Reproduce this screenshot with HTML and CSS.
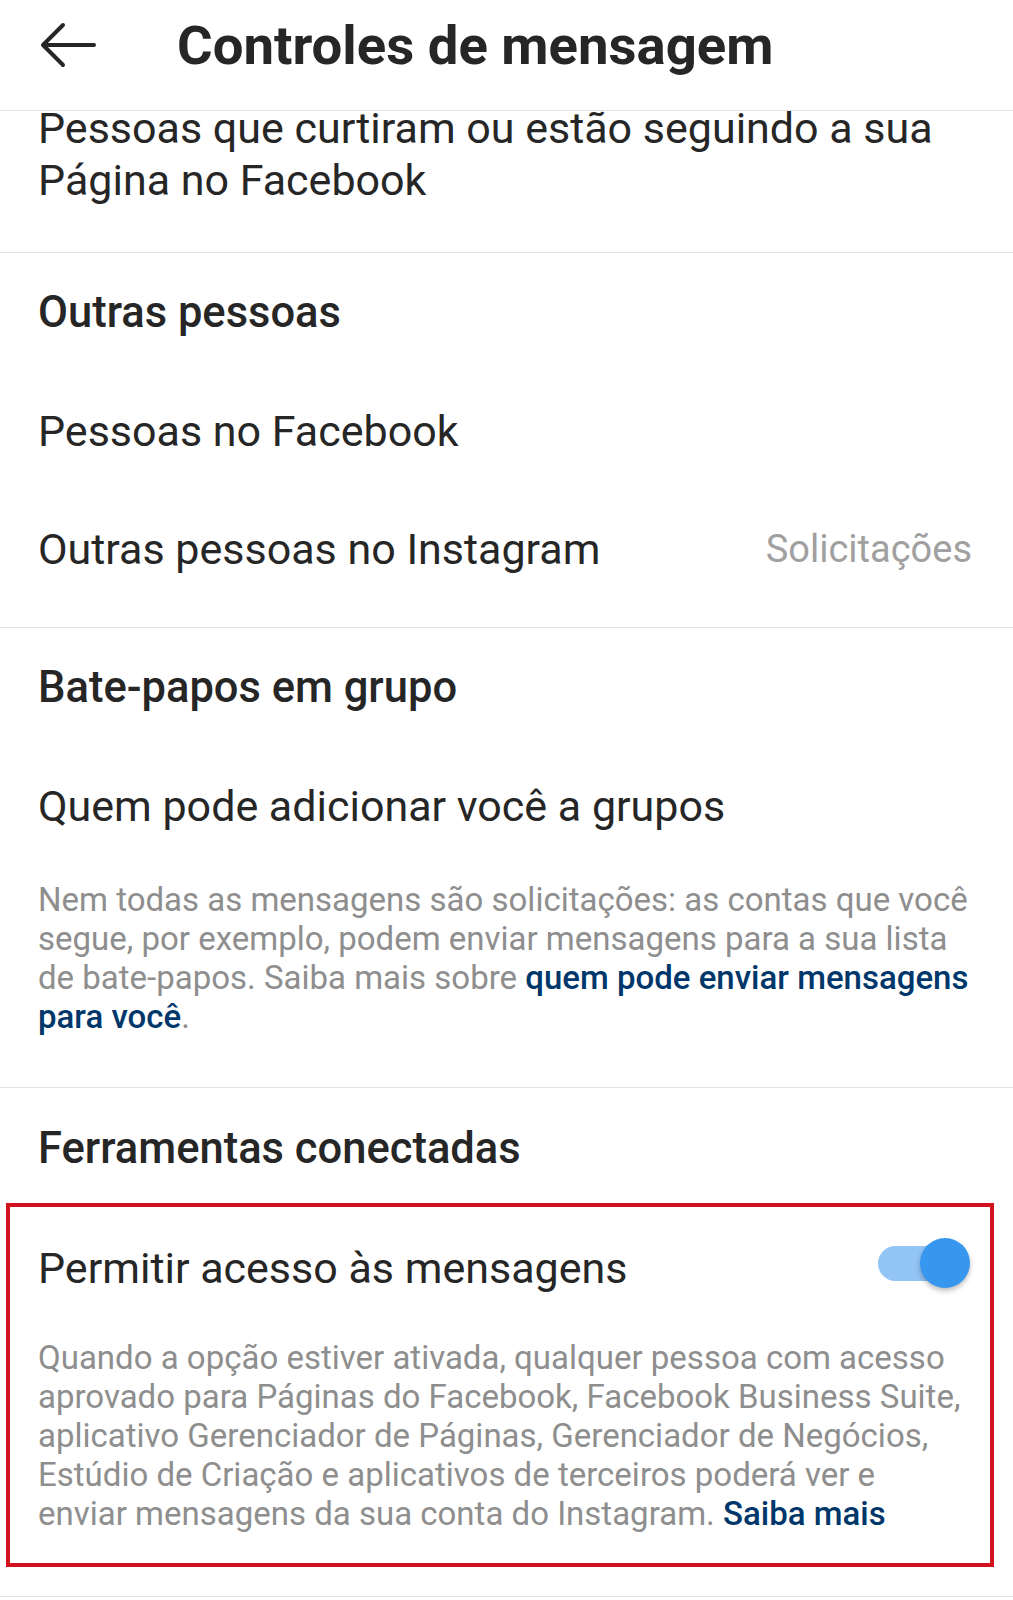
FILE: index.html
```html
<!DOCTYPE html>
<html lang="pt-BR">
<head>
  <meta charset="UTF-8">
  <meta name="viewport" content="width=device-width, initial-scale=1.0">
  <title>Controles de mensagem</title>
  <link rel="stylesheet" href="styles.css">
</head>
<body>
  <header class="topbar">
    <svg class="back-icon" width="60" height="48" viewBox="0 0 60 48" aria-label="Voltar">
      <path d="M56 24H5M25 4L5 24l20 20" fill="none" stroke="#262626" stroke-width="4" stroke-linecap="round" stroke-linejoin="round"/>
    </svg>
    <h1 class="title">Controles de mensagem</h1>
  </header>

  <!-- lista já rolada: o primeiro item aparece cortado debaixo do cabeçalho -->
  <section class="section first">
    <p class="item-text">Pessoas que curtiram ou estão seguindo a sua Página no Facebook</p>
  </section>

  <section class="section">
    <div class="row heading">Outras pessoas</div>
    <div class="row">Pessoas no Facebook</div>
    <div class="row">
      <span>Outras pessoas no Instagram</span>
      <span class="value">Solicitações</span>
    </div>
  </section>

  <section class="section">
    <div class="row heading">Bate-papos em grupo</div>
    <div class="row">Quem pode adicionar você a grupos</div>
    <p class="note">Nem todas as mensagens são solicitações: as contas que você segue, por exemplo, podem enviar mensagens para a sua lista de bate-papos. Saiba mais sobre <a href="#" class="link">quem pode enviar mensagens para você</a>.</p>
  </section>

  <section class="section last">
    <div class="row heading">Ferramentas conectadas</div>
    <div class="highlight">
      <div class="row toggle-row">
        <span>Permitir acesso às mensagens</span>
        <span class="switch"><span class="knob"></span></span>
      </div>
      <p class="note">Quando a opção estiver ativada, qualquer pessoa com acesso aprovado para Páginas do Facebook, Facebook Business Suite, aplicativo Gerenciador de Páginas, Gerenciador de Negócios, Estúdio de Criação e aplicativos de terceiros poderá ver e enviar mensagens da sua conta do Instagram. <a href="#" class="link">Saiba mais</a></p>
    </div>
  </section>
</body>
</html>
```

FILE: styles.css
```css
body {
  margin: 0;
  background: #fff;
  color: #262626;
  font-family: Roboto, "Noto Sans", sans-serif;
  overflow: hidden;
}

/* cabeçalho */
.topbar {
  position: relative;
  z-index: 1;
  display: flex;
  align-items: center;
  height: 90px;
  padding: 0 0 20px 38px;
  background: #fff;
  border-bottom: 1px solid #e2e2e2;
}

.back-icon {
  flex: none;
  margin-right: 79px;
}

.title {
  margin: 0;
  font-size: 54.5px;
  line-height: 54px;
  font-weight: 700;
}

/* seções */
.section {
  padding: 1px 0 19px;
  border-bottom: 1px solid #e2e2e2;
}

.section.first {
  margin-top: -9px;
  padding: 0 38px 46px;
}

.item-text {
  margin: 0;
  font-size: 43px;
  line-height: 52px;
}

.row {
  display: flex;
  align-items: center;
  justify-content: space-between;
  min-height: 118px;
  padding: 0 41px 0 38px;
  font-size: 43px;
  line-height: 52px;
}

.heading {
  font-weight: 500;
  font-size: 43.5px;
}

.value {
  color: #a0a0a0;
  font-size: 38px;
}

.note {
  margin: 15px 0 0;
  padding: 0 35px 0 38px;
  color: #8e8e8e;
  font-size: 33px;
  line-height: 39px;
}

.section .note {
  margin-bottom: 32px;
}

.link {
  color: #00376b;
  font-weight: 500;
  text-decoration: none;
}

/* última seção com o destaque vermelho */
.section.last {
  padding: 2px 0 29px;
}

.highlight {
  margin: -5px 19px 0 6px;
  padding: 2px 0 30px;
  border: 4px solid #d1131f;
}

.highlight .row {
  padding: 0 27px 0 28px;
}

.highlight .note {
  margin: 11px 0 0;
  padding: 0 22px 0 28px;
}

.switch {
  position: relative;
  flex: none;
  width: 85px;
  height: 35px;
  margin-bottom: 10px;
  border-radius: 18px;
  background: #92c4f5;
}

.knob {
  position: absolute;
  right: -7px;
  top: -7.5px;
  width: 50px;
  height: 50px;
  border-radius: 50%;
  background: #3797ef;
  box-shadow: 0 3px 5px rgba(0, 0, 0, 0.25);
}
```
